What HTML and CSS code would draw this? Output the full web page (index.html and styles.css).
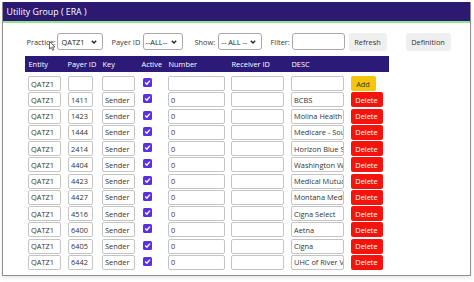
FILE: index.html
```html
<!DOCTYPE html>
<html>
<head>
<meta charset="utf-8">
<link rel="stylesheet" href="styles.css">
</head>
<body>
<div class="window">
  <div class="titlebar">Utility Group ( ERA )</div>
  <div class="toolbar">
    <span class="lbl lbl-practice">Practice:</span>
    <div class="sel sel-practice"><span>QATZ1</span><svg class="chev" width="6" height="4" viewBox="0 0 6 4"><polyline points="0.8,0.8 3,3 5.2,0.8" fill="none" stroke="#222" stroke-width="1.4"/></svg></div>
    <span class="lbl lbl-payer">Payer ID</span>
    <div class="sel sel-payer"><span>--ALL--</span><svg class="chev" width="6" height="4" viewBox="0 0 6 4"><polyline points="0.8,0.8 3,3 5.2,0.8" fill="none" stroke="#222" stroke-width="1.4"/></svg></div>
    <span class="lbl lbl-show">Show:</span>
    <div class="sel sel-show"><span>-- ALL --</span><svg class="chev" width="6" height="4" viewBox="0 0 6 4"><polyline points="0.8,0.8 3,3 5.2,0.8" fill="none" stroke="#222" stroke-width="1.4"/></svg></div>
    <span class="lbl lbl-filter">Filter:</span>
    <input class="txt filter" type="text" value="">
    <div class="btn btn-refresh">Refresh</div>
    <div class="btn btn-def">Definition</div>
  </div>

  <div class="table">
    <div class="thead">
      <span>Entity</span><span>Payer ID</span><span>Key</span><span>Active</span><span>Number</span><span>Receiver ID</span><span>DESC</span><span></span>
    </div>
    <div class="tbody">
      <div class="row">
        <input class="f w-ent" value="QATZ1"><input class="f w-pay" value=""><input class="f w-key" value="">
        <div class="cb"><svg width="9" height="9" viewBox="0 0 9 9"><polyline points="2.2,4.6 3.9,6.2 6.9,2.6" fill="none" stroke="#fff" stroke-width="1.4"/></svg></div>
        <input class="f w-num" value=""><input class="f w-rec" value=""><input class="f w-desc" value="">
        <div class="add">Add</div>
      </div>
      <div class="row">
        <input class="f w-ent" value="QATZ1"><input class="f w-pay" value="1411"><input class="f w-key" value="Sender">
        <div class="cb"><svg width="9" height="9" viewBox="0 0 9 9"><polyline points="2.2,4.6 3.9,6.2 6.9,2.6" fill="none" stroke="#fff" stroke-width="1.4"/></svg></div>
        <input class="f w-num" value="0"><input class="f w-rec" value=""><input class="f w-desc" value="BCBS">
        <div class="del">Delete</div>
      </div>
      <div class="row">
        <input class="f w-ent" value="QATZ1"><input class="f w-pay" value="1423"><input class="f w-key" value="Sender">
        <div class="cb"><svg width="9" height="9" viewBox="0 0 9 9"><polyline points="2.2,4.6 3.9,6.2 6.9,2.6" fill="none" stroke="#fff" stroke-width="1.4"/></svg></div>
        <input class="f w-num" value="0"><input class="f w-rec" value=""><input class="f w-desc" value="Molina Health">
        <div class="del">Delete</div>
      </div>
      <div class="row">
        <input class="f w-ent" value="QATZ1"><input class="f w-pay" value="1444"><input class="f w-key" value="Sender">
        <div class="cb"><svg width="9" height="9" viewBox="0 0 9 9"><polyline points="2.2,4.6 3.9,6.2 6.9,2.6" fill="none" stroke="#fff" stroke-width="1.4"/></svg></div>
        <input class="f w-num" value="0"><input class="f w-rec" value=""><input class="f w-desc" value="Medicare - Southwest">
        <div class="del">Delete</div>
      </div>
      <div class="row">
        <input class="f w-ent" value="QATZ1"><input class="f w-pay" value="2414"><input class="f w-key" value="Sender">
        <div class="cb"><svg width="9" height="9" viewBox="0 0 9 9"><polyline points="2.2,4.6 3.9,6.2 6.9,2.6" fill="none" stroke="#fff" stroke-width="1.4"/></svg></div>
        <input class="f w-num" value="0"><input class="f w-rec" value=""><input class="f w-desc" value="Horizon Blue Shield">
        <div class="del">Delete</div>
      </div>
      <div class="row">
        <input class="f w-ent" value="QATZ1"><input class="f w-pay" value="4404"><input class="f w-key" value="Sender">
        <div class="cb"><svg width="9" height="9" viewBox="0 0 9 9"><polyline points="2.2,4.6 3.9,6.2 6.9,2.6" fill="none" stroke="#fff" stroke-width="1.4"/></svg></div>
        <input class="f w-num" value="0"><input class="f w-rec" value=""><input class="f w-desc" value="Washington West">
        <div class="del">Delete</div>
      </div>
      <div class="row">
        <input class="f w-ent" value="QATZ1"><input class="f w-pay" value="4423"><input class="f w-key" value="Sender">
        <div class="cb"><svg width="9" height="9" viewBox="0 0 9 9"><polyline points="2.2,4.6 3.9,6.2 6.9,2.6" fill="none" stroke="#fff" stroke-width="1.4"/></svg></div>
        <input class="f w-num" value="0"><input class="f w-rec" value=""><input class="f w-desc" value="Medical Mutual">
        <div class="del">Delete</div>
      </div>
      <div class="row">
        <input class="f w-ent" value="QATZ1"><input class="f w-pay" value="4427"><input class="f w-key" value="Sender">
        <div class="cb"><svg width="9" height="9" viewBox="0 0 9 9"><polyline points="2.2,4.6 3.9,6.2 6.9,2.6" fill="none" stroke="#fff" stroke-width="1.4"/></svg></div>
        <input class="f w-num" value="0"><input class="f w-rec" value=""><input class="f w-desc" value="Montana Medical">
        <div class="del">Delete</div>
      </div>
      <div class="row">
        <input class="f w-ent" value="QATZ1"><input class="f w-pay" value="4516"><input class="f w-key" value="Sender">
        <div class="cb"><svg width="9" height="9" viewBox="0 0 9 9"><polyline points="2.2,4.6 3.9,6.2 6.9,2.6" fill="none" stroke="#fff" stroke-width="1.4"/></svg></div>
        <input class="f w-num" value="0"><input class="f w-rec" value=""><input class="f w-desc" value="Cigna Select">
        <div class="del">Delete</div>
      </div>
      <div class="row">
        <input class="f w-ent" value="QATZ1"><input class="f w-pay" value="6400"><input class="f w-key" value="Sender">
        <div class="cb"><svg width="9" height="9" viewBox="0 0 9 9"><polyline points="2.2,4.6 3.9,6.2 6.9,2.6" fill="none" stroke="#fff" stroke-width="1.4"/></svg></div>
        <input class="f w-num" value="0"><input class="f w-rec" value=""><input class="f w-desc" value="Aetna">
        <div class="del">Delete</div>
      </div>
      <div class="row">
        <input class="f w-ent" value="QATZ1"><input class="f w-pay" value="6405"><input class="f w-key" value="Sender">
        <div class="cb"><svg width="9" height="9" viewBox="0 0 9 9"><polyline points="2.2,4.6 3.9,6.2 6.9,2.6" fill="none" stroke="#fff" stroke-width="1.4"/></svg></div>
        <input class="f w-num" value="0"><input class="f w-rec" value=""><input class="f w-desc" value="Cigna">
        <div class="del">Delete</div>
      </div>
      <div class="row">
        <input class="f w-ent" value="QATZ1"><input class="f w-pay" value="6442"><input class="f w-key" value="Sender">
        <div class="cb"><svg width="9" height="9" viewBox="0 0 9 9"><polyline points="2.2,4.6 3.9,6.2 6.9,2.6" fill="none" stroke="#fff" stroke-width="1.4"/></svg></div>
        <input class="f w-num" value="0"><input class="f w-rec" value=""><input class="f w-desc" value="UHC of River Valley">
        <div class="del">Delete</div>
      </div>
    </div>
  </div>
  <svg class="cursor" width="7" height="10" viewBox="0 0 7 10"><path d="M0.5,0.5 L0.5,8 L2.3,6.4 L3.6,9.3 L4.8,8.8 L3.6,6 L6,6 Z" fill="#fff" stroke="#444" stroke-width="0.8"/></svg>
</div>
</body>
</html>
```

FILE: styles.css
```css
* { box-sizing: border-box; }
html, body { margin: 0; padding: 0; background: #ffffff; }
body {
  font-family: "Open Sans", "Noto Sans", sans-serif;
  color: #333;
  width: 474px;
  height: 282px;
  overflow: hidden;
}
.window {
  position: relative;
  margin: 2px 0 0 2px;
  width: 469px;
  height: 274px;
  background: #fff;
  border: 1.5px solid #8e8e8e;
  border-top: none;
  box-shadow: 0 2px 4px rgba(0,0,0,0.10);
}
.titlebar {
  height: 21px;
  background: #2c1a72;
  color: #fff;
  font-size: 8.8px;
  padding-left: 3.5px;
  display: flex;
  align-items: center;
  border-bottom: 2px solid #8fe58c;
}
.toolbar {
  display: flex;
  align-items: center;
  height: 17px;
  margin-top: 10px;
  padding-left: 23.5px;
  font-size: 7.4px;
  color: #3a3a3a;
}
.lbl { white-space: nowrap; }
.lbl-practice { width: 30px; }
.lbl-payer { width: 31px; margin-left: 9px; }
.lbl-show { width: 23px; margin-left: 12px; }
.lbl-filter { width: 21px; margin-left: 9px; }
.sel {
  height: 17px;
  border: 1px solid #a9a9a9;
  border-radius: 3px;
  background: #fff;
  display: flex;
  align-items: center;
  justify-content: space-between;
  padding: 0 5px 0 4px;
  color: #222;
}
.sel-practice { width: 46px; }
.sel-payer { width: 40px; padding-left: 2px; }
.sel-show { width: 44px; padding-left: 3px; }
.chev { display: block; }
.txt {
  height: 17px;
  border: 1px solid #a9a9a9;
  border-radius: 3px;
  background: #fff;
  padding: 0;
  margin: 0;
  outline: none;
}
.filter { width: 53px; }
.btn {
  height: 18px;
  background: #efefef;
  border-radius: 3px;
  display: flex;
  align-items: center;
  justify-content: center;
  color: #333;
}
.btn-refresh { width: 38px; margin-left: 4px; }
.btn-def { width: 45px; margin-left: 19px; }

.table {
  margin: 6px 0 0 21.5px;
  width: 364px;
  font-size: 7.4px;
}
.thead, .row {
  display: grid;
  grid-template-columns: 40px 34px 39px 27px 63px 60px 60px 38px;
  padding-left: 3px;
}
.thead {
  height: 16px;
  background: #2c1a78;
  color: #fff;
  align-items: center;
}
.thead span { padding-left: 1px; white-space: nowrap; }
.thead span:nth-child(2) { margin-left: -1px; }
.tbody { padding-top: 4px; }
.row { height: 16.27px; align-items: start; }
.f {
  display: block;
  height: 15px;
  margin: 0;
  border: 1px solid #c4c4c4;
  border-radius: 2px;
  background: #fff;
  padding: 0 0 0 2.5px;
  font-family: inherit;
  font-size: 7.4px;
  line-height: 13px;
  color: #333;
  outline: none;
}
.w-ent { width: 33px; }
.w-pay { width: 25px; }
.w-key { width: 33px; }
.w-num { width: 57px; }
.w-rec { width: 53px; }
.w-desc { width: 53px; }
.cb {
  width: 9px;
  height: 9px;
  margin: 2px 0 0 2px;
  background: #5b30e3;
  border-radius: 1.5px;
}
.cb svg { display: block; }
.add, .del {
  height: 15px;
  border-radius: 2px;
  display: flex;
  align-items: center;
  justify-content: center;
}
.add {
  width: 25px;
  background: #f4c60c;
  color: #333;
}
.del {
  width: 32px;
  background: #f5140d;
  color: #fff;
}
.cursor {
  position: absolute;
  left: 46px;
  top: 39px;
}
```
